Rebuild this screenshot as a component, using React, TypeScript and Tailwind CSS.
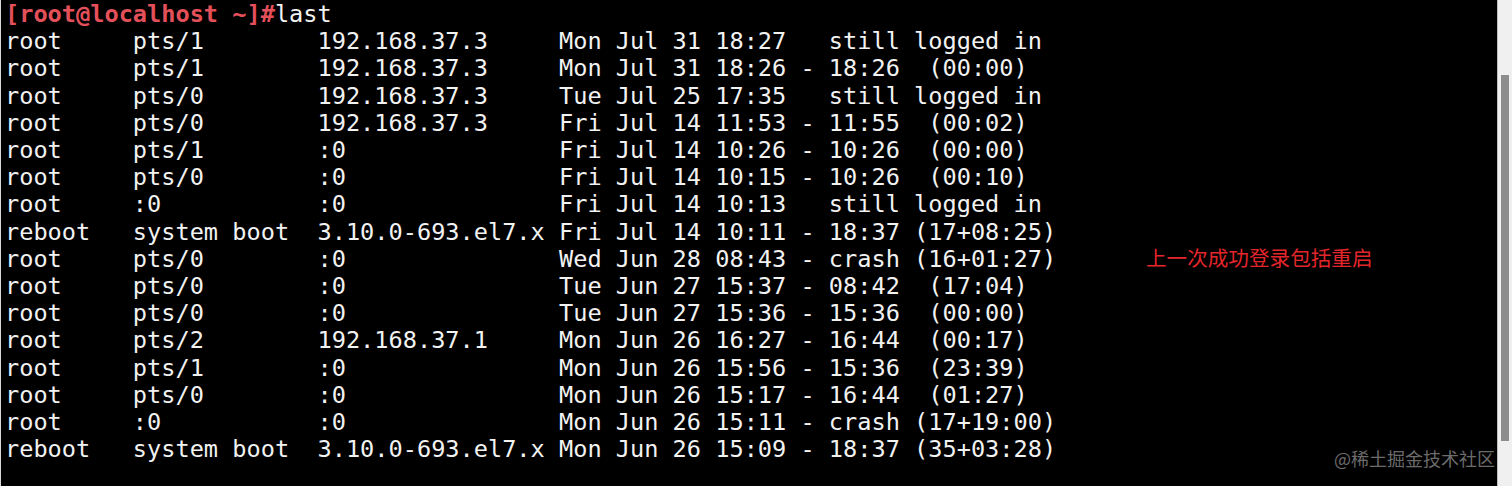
const rows = [
  "root     pts/1        192.168.37.3     Mon Jul 31 18:27   still logged in",
  "root     pts/1        192.168.37.3     Mon Jul 31 18:26 - 18:26  (00:00)",
  "root     pts/0        192.168.37.3     Tue Jul 25 17:35   still logged in",
  "root     pts/0        192.168.37.3     Fri Jul 14 11:53 - 11:55  (00:02)",
  "root     pts/1        :0               Fri Jul 14 10:26 - 10:26  (00:00)",
  "root     pts/0        :0               Fri Jul 14 10:15 - 10:26  (00:10)",
  "root     :0           :0               Fri Jul 14 10:13   still logged in",
  "reboot   system boot  3.10.0-693.el7.x Fri Jul 14 10:11 - 18:37 (17+08:25)",
  "root     pts/0        :0               Wed Jun 28 08:43 - crash (16+01:27)",
  "root     pts/0        :0               Tue Jun 27 15:37 - 08:42  (17:04)",
  "root     pts/0        :0               Tue Jun 27 15:36 - 15:36  (00:00)",
  "root     pts/2        192.168.37.1     Mon Jun 26 16:27 - 16:44  (00:17)",
  "root     pts/1        :0               Mon Jun 26 15:56 - 15:36  (23:39)",
  "root     pts/0        :0               Mon Jun 26 15:17 - 16:44  (01:27)",
  "root     :0           :0               Mon Jun 26 15:11 - crash (17+19:00)",
  "reboot   system boot  3.10.0-693.el7.x Mon Jun 26 15:09 - 18:37 (35+03:28)",
];

export default function App() {
  return (
    <div className="w-[1512px] h-[486px] flex bg-black overflow-hidden">
      {/* terminal */}
      <div className="relative flex-1 border-l border-[#d8d8d8]">
        <div className="pl-[4px] pt-[1px] font-['DejaVu_Sans_Mono',monospace] text-[23.6px] leading-[27.2px] text-[#f2f2f2] whitespace-pre">
          <div>
            <span className="font-bold text-[#e4505a]">[root@localhost ~]#</span>
            <span>last</span>
          </div>
          {rows.map((row, i) => (
            <div key={i}>{row}</div>
          ))}
        </div>

        <div className="absolute left-[1145px] top-[244px] font-['Noto_Sans_CJK_SC',sans-serif] text-[20.6px] leading-[26px] text-[#e3262b]">
          上一次成功登录包括重启
        </div>

        <div className="absolute right-[2px] top-[446px] font-['Noto_Sans_CJK_SC',sans-serif] text-[18px] leading-[24px] text-[#6b6b6b]">
          @稀土掘金技术社区
        </div>
      </div>

      {/* scrollbar */}
      <div className="w-[15px] h-full bg-[#f0f0f0] border-l border-[#bdbdbd] pt-[75px] pl-[3px]">
        <div className="w-[8px] h-[366px] bg-[#8d8d8d]" />
      </div>
    </div>
  );
}
